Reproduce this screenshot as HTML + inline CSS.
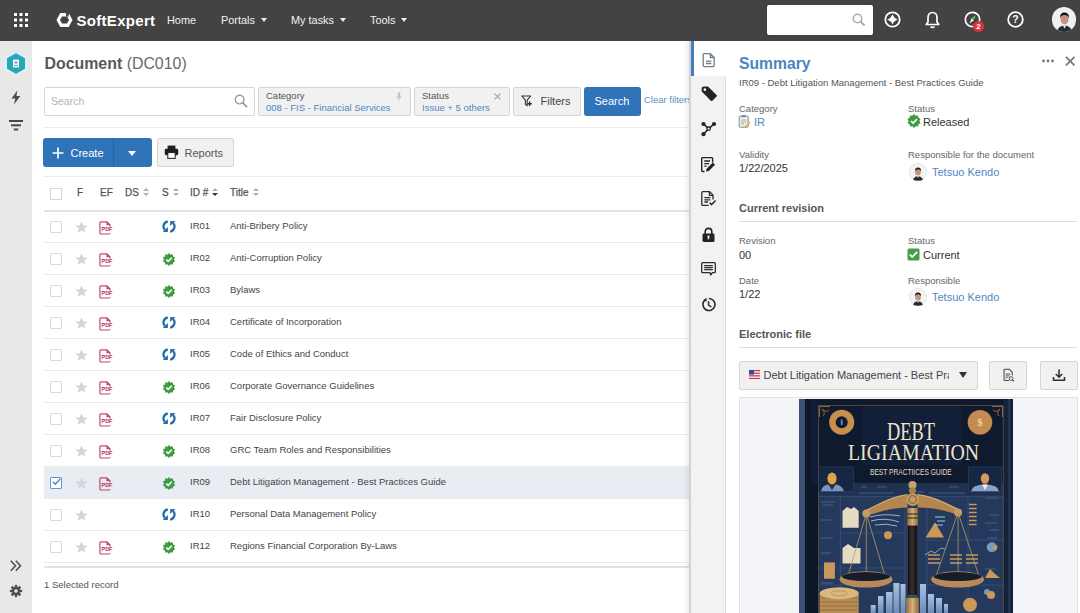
<!DOCTYPE html>
<html><head><meta charset="utf-8">
<style>
*{box-sizing:border-box;margin:0;padding:0}
html,body{width:1080px;height:613px;overflow:hidden;background:#fff;font-family:"Liberation Sans",sans-serif;color:#444}
.a{position:absolute;white-space:nowrap}
#hdr{position:absolute;left:0;top:0;width:1080px;height:41px;background:#434343}
#side{position:absolute;left:0;top:41px;width:32px;height:572px;background:#e8e8e8}
.nav{color:#f2f2f2;font-size:10.9px;top:14px}
.caret{display:inline-block;width:0;height:0;border-left:3.5px solid transparent;border-right:3.5px solid transparent;border-top:4px solid #eee;vertical-align:middle;margin-left:6px;margin-top:-2px}
.chip{position:absolute;top:87px;height:29px;background:#f1f1f1;border:1px solid #d6d6d6;border-radius:2px}
.chip .l{position:absolute;left:7px;top:1.5px;font-size:9.5px;color:#555}
.chip .v{position:absolute;left:7px;top:14px;font-size:9.5px;color:#5088c0}
.row{position:absolute;left:44px;width:646px;height:32px;border-bottom:1px solid #ebebeb}
.cb{position:absolute;left:6px;top:10.3px;width:12px;height:12px;border:1px solid #d9d9d9;background:#fff;border-radius:1px}
.rt{position:absolute;font-size:9.5px;color:#444;top:9.3px}
.th{position:absolute;font-size:10px;color:#555;top:187px;-webkit-text-stroke:0.25px #555}
.lbl{position:absolute;font-size:9.5px;color:#666}
.val{position:absolute;font-size:11px;color:#333;margin-top:0.5px}
.sec{position:absolute;font-size:11px;color:#555;font-weight:bold}
.link{color:#5088c0}
.tab{position:absolute;left:691px;width:35px;height:35px;background:#f2f2f2}
.ic{position:absolute}
.row.sel{background:#e8edf3}
.cb.on{border-color:#5a9ad6;background:#fff}
.srt{display:inline-block;width:6px;height:9px;margin-left:4px;vertical-align:-1px;position:relative}
.srt:before,.srt:after{content:"";position:absolute;left:0;border-left:3px solid transparent;border-right:3px solid transparent}
.srt:before{top:0;border-bottom:3px solid #b0b0b0}
.srt:after{top:5px;border-top:3px solid #b0b0b0}
.srt.d:after{border-top-color:#333}
</style></head><body>
<svg width="0" height="0" style="position:absolute">
<defs>
<symbol id="star" viewBox="0 0 12 11.3"><path d="M6.00 0.20 L7.59 4.02 L11.71 4.35 L8.57 7.03 L9.53 11.05 L6.00 8.90 L2.47 11.05 L3.43 7.03 L0.29 4.35 L4.41 4.02Z" fill="#d6d6d6"/></symbol>
<symbol id="pdf" viewBox="0 0 14 14"><path d="M8 0.8 H2 Q0.9 0.8 0.9 1.9 V12 Q0.9 13 2 13 H9.8 Q10.9 13 10.9 12 M10.9 5.6 V3.7 L8 0.8 V3.7 H10.9" fill="none" stroke="#c04a6a" stroke-width="1.2" stroke-linejoin="round"/><text x="2.6" y="10.4" font-family="Liberation Sans" font-weight="bold" font-size="5.4" fill="#b02c52" textLength="10.8" lengthAdjust="spacingAndGlyphs">PDF</text></symbol>
<symbol id="sync" viewBox="0 0 14 13"><path d="M5.8 1.5 A5 5 0 0 0 3.0 10.0" fill="none" stroke="#2a6cab" stroke-width="2.3"/><path d="M0.6 12.1 L5.9 12.1 L5.9 6.9Z" fill="#2a6cab"/><path d="M8.2 11.5 A5 5 0 0 0 11.0 3.0" fill="none" stroke="#2a6cab" stroke-width="2.3"/><path d="M13.4 0.9 L8.1 0.9 L8.1 6.1Z" fill="#2a6cab"/></symbol>
<symbol id="badge" viewBox="0 0 13 13"><path d="M6.50 0.10 L8.05 1.74 L10.26 1.32 L10.55 3.56 L12.59 4.52 L11.50 6.50 L12.59 8.48 L10.55 9.44 L10.26 11.68 L8.05 11.26 L6.50 12.90 L4.95 11.26 L2.74 11.68 L2.45 9.44 L0.41 8.48 L1.50 6.50 L0.41 4.52 L2.45 3.56 L2.74 1.32 L4.95 1.74Z" fill="#3e9a43"/><path d="M3.8 6.6 L5.7 8.4 L9.3 4.8" fill="none" stroke="#fff" stroke-width="1.6"/></symbol>
<symbol id="av" viewBox="0 0 18 18"><circle cx="9" cy="9" r="8.6" fill="#f4f4f6" stroke="#d6d6da" stroke-width="0.6"/><path d="M4.2 17 Q4.8 13.2 9 13.2 Q13.2 13.2 13.8 17 Q11.5 17.8 9 17.8 Q6.5 17.8 4.2 17Z" fill="#2a2a2e"/><path d="M8.1 13.2 L9 15 L9.9 13.2Z" fill="#fff"/><ellipse cx="9" cy="9" rx="2.9" ry="3.6" fill="#c9937a"/><path d="M5.9 8.2 Q5.8 4.6 9 4.6 Q12.2 4.6 12.1 8.2 Q11.4 6.4 9 6.3 Q6.6 6.4 5.9 8.2Z" fill="#1a1a1a"/></symbol>
</defs></svg>
<!-- HEADER -->
<div id="hdr">
  <!-- grid icon -->
  <svg class="a" style="left:14px;top:13px" width="14" height="14" viewBox="0 0 14 14" fill="#fff">
    <rect x="0" y="0" width="3" height="3"/><rect x="5.5" y="0" width="3" height="3"/><rect x="11" y="0" width="3" height="3"/>
    <rect x="0" y="5.5" width="3" height="3"/><rect x="5.5" y="5.5" width="3" height="3"/><rect x="11" y="5.5" width="3" height="3"/>
    <rect x="0" y="11" width="3" height="3"/><rect x="5.5" y="11" width="3" height="3"/><rect x="11" y="11" width="3" height="3"/>
  </svg>
  <!-- logo -->
  <svg class="a" style="left:56px;top:12px" width="17" height="16" viewBox="0 0 17 16">
    <path d="M4.3 1 L12.7 1 L16.5 8 L12.7 15 L4.3 15 L0.5 8 Z" fill="#fff"/>
    <path d="M6 4.5 L11 4.5 L13 8 L11 11.5 L6 11.5 L4 8 Z" fill="#434343"/>
    <path d="M9.6 -1 L13.4 -1 L12.4 4.8 L10.2 4.6 Z" fill="#434343"/>
  </svg>
  <div class="a" style="left:76.5px;top:11.5px;font-size:15px;font-weight:bold;color:#fff;letter-spacing:0.3px">SoftExpert</div>
  <div class="a nav" style="left:167px">Home</div>
  <div class="a nav" style="left:221px">Portals<span class="caret"></span></div>
  <div class="a nav" style="left:291px">My tasks<span class="caret"></span></div>
  <div class="a nav" style="left:370px">Tools<span class="caret"></span></div>
  <!-- search -->
  <div class="a" style="left:767px;top:5px;width:106px;height:30px;background:#fff;border-radius:2px"></div>
  <svg class="a" style="left:852px;top:13px" width="14" height="14" viewBox="0 0 14 14"><circle cx="5.5" cy="5.5" r="4.2" fill="none" stroke="#aaa" stroke-width="1.5"/><path d="M8.5 8.5 L12.5 12.5" stroke="#aaa" stroke-width="2"/></svg>
  <!-- icons -->
  <svg class="a" style="left:884px;top:11.2px" width="17" height="17" viewBox="0 0 17 17"><circle cx="8.5" cy="8.5" r="7.2" fill="none" stroke="#fff" stroke-width="1.8"/><path d="M8.5 3.5 Q10 7 13.5 8.5 Q10 10 8.5 13.5 Q7 10 3.5 8.5 Q7 7 8.5 3.5 Z" fill="#fff"/></svg>
  <svg class="a" style="left:925px;top:11px" width="15" height="18" viewBox="0 0 15 18"><path d="M7.5 1.5 C4.5 1.5 3 4 3 6.5 L3 11 L1.2 13.5 L13.8 13.5 L12 11 L12 6.5 C12 4 10.5 1.5 7.5 1.5 Z" fill="none" stroke="#fff" stroke-width="1.7" stroke-linejoin="round"/><path d="M5.5 15.5 Q7.5 17.5 9.5 15.5" stroke="#fff" stroke-width="1.6" fill="none"/></svg>
  <svg class="a" style="left:964px;top:11px" width="18" height="18" viewBox="0 0 18 18"><circle cx="8.5" cy="8.5" r="7.2" fill="none" stroke="#fff" stroke-width="1.7"/><path d="M11.5 4.5 L9.5 9.5 L5.5 12.5 L7.5 7.5 Z" fill="#fff"/><path d="M11.5 4.5 L9.5 9.5 L7.5 7.5 Z" fill="#4caf50"/></svg>
  <div class="a" style="left:973px;top:21px;width:11px;height:11px;border-radius:50%;background:#e0323c;color:#fff;font-size:8px;font-weight:bold;text-align:center;line-height:11px">2</div>
  <svg class="a" style="left:1007px;top:11.2px" width="17" height="17" viewBox="0 0 17 17"><circle cx="8.5" cy="8.5" r="7.3" fill="none" stroke="#fff" stroke-width="1.8"/><text x="8.5" y="12.3" text-anchor="middle" font-family="Liberation Sans" font-weight="bold" font-size="10.5" fill="#fff">?</text></svg>
  <!-- avatar -->
  <div class="a" style="left:1051.5px;top:7.3px;width:24.6px;height:24.6px;border-radius:50%;background:#eef0f3;overflow:hidden">
    <svg width="25" height="25" viewBox="0 0 25 25"><path d="M5 25 Q6 18.5 12.5 18.5 Q19 18.5 20 25Z" fill="#2a2d36"/><path d="M11 18.5 L12.5 21.5 L14 18.5Z" fill="#fff"/><ellipse cx="12.5" cy="12" rx="4.2" ry="5.3" fill="#c9927a"/><path d="M8 11 Q7.8 5.5 12.5 5.5 Q17.2 5.5 17 11 Q16 8 12.5 8 Q9 8 8 11Z" fill="#151515"/></svg>
  </div>
</div>

<!-- LEFT SIDEBAR -->
<div id="side"></div>
<svg class="a" style="left:4px;top:50px" width="24" height="27" viewBox="0 0 24 27">
  <path d="M12 1.2 L22.9 7.3 L22.9 19.7 L12 25.8 L1.1 19.7 L1.1 7.3 Z" fill="#d6f4f8"/>
  <path d="M12 3.2 L21 8.2 L21 18.8 L12 23.8 L3 18.8 L3 8.2 Z" fill="#2aa6b8"/>
  <path d="M9 9.6 H15 V17.4 H9 Z" fill="#fff"/>
  <path d="M10.2 12.6 H13.8 M12 10.8 V14.4 M10.2 15.6 H13.8" stroke="#2aa6b8" stroke-width="0.9"/>
</svg>
<svg class="a" style="left:10px;top:90px" width="12" height="15" viewBox="0 0 12 15"><path d="M7.3 0.5 L1.5 8.5 L5.3 8.5 L4 14.5 L10.4 6 L6.5 6 Z" fill="#4d4d4d"/></svg>
<svg class="a" style="left:9px;top:119px" width="15" height="12" viewBox="0 0 15 12"><rect x="0" y="1" width="14" height="2" fill="#4a4a4a"/><rect x="2" y="5.3" width="10" height="2" fill="#4a4a4a"/><rect x="4.8" y="9.5" width="4.4" height="2" fill="#4a4a4a"/></svg>
<svg class="a" style="left:9px;top:559px" width="14" height="14" viewBox="0 0 14 14"><path d="M1.8 1.8 L6.5 6.8 L1.8 11.8 M6.8 1.8 L11.5 6.8 L6.8 11.8" fill="none" stroke="#4a4a4a" stroke-width="1.5"/></svg>
<svg class="a" style="left:9px;top:583.7px" width="14" height="14" viewBox="0 0 14 14"><g fill="#505050"><circle cx="7" cy="7" r="4.2"/><g id="gt"><rect x="5.8" y="0.8" width="2.4" height="12.4"/><rect x="5.8" y="0.8" width="2.4" height="12.4" transform="rotate(45 7 7)"/><rect x="5.8" y="0.8" width="2.4" height="12.4" transform="rotate(90 7 7)"/><rect x="5.8" y="0.8" width="2.4" height="12.4" transform="rotate(135 7 7)"/></g></g><circle cx="7" cy="7" r="1.8" fill="#e8e8e8"/></svg>

<!-- MAIN TITLE -->
<div class="a" style="left:44.5px;top:55.2px;font-size:15.9px;color:#585858"><b>Document</b> <span style="color:#6a6a6a">(DC010)</span></div>

<!-- Search / filters -->
<div class="a" style="left:44px;top:87px;width:211px;height:29px;border:1px solid #d6d6d6;border-radius:2px;background:#fff"></div>
<div class="a" style="left:51px;top:95px;font-size:10.5px;color:#b5b5b5">Search</div>
<div class="chip" style="left:258px;width:153px"><div class="l">Category</div><div class="v">008 - FIS - Financial Services</div></div>
<div class="chip" style="left:414px;width:96px"><div class="l">Status</div><div class="v">Issue + 5 others</div></div>
<div class="a" style="left:513px;top:87px;width:68px;height:29px;background:#f1f1f1;border:1px solid #d6d6d6;border-radius:2px"></div>
<div class="a" style="left:540.5px;top:95px;font-size:11px;color:#444">Filters</div>
<div class="a" style="left:584px;top:87px;width:57px;height:29px;background:#2f73b9;border-radius:3px"></div>
<div class="a" style="left:594.5px;top:95px;font-size:11px;color:#fff">Search</div>
<div class="a" style="left:644px;top:94px;font-size:9.5px;color:#5a8fc4">Clear filters</div>
<div class="a" style="left:44px;top:127px;width:646px;height:1px;background:#ececec"></div>

<!-- Create / Reports -->
<div class="a" style="left:43px;top:138px;width:109px;height:29px;background:#2f73b9;border-radius:3px"></div>
<div class="a" style="left:113px;top:138px;width:1px;height:29px;background:#2763a3"></div>
<div class="a" style="left:70.5px;top:146.5px;font-size:11px;color:#fff">Create</div>
<div class="a" style="left:157px;top:138px;width:77px;height:29px;background:#f1f1f1;border:1px solid #d6d6d6;border-radius:2px"></div>
<div class="a" style="left:184.5px;top:146.5px;font-size:11px;color:#555">Reports</div>

<!-- table header -->
<div class="a" style="left:44px;top:176px;width:646px;height:1px;background:#ececec"></div>
<div class="a" style="left:44px;top:210px;width:646px;height:2px;background:#e3e3e3"></div>

<div class="a" style="left:50px;top:188px;width:12px;height:12px;border:1px solid #d4d4d4;background:#fff"></div>
<div class="th" style="left:77px">F</div>
<div class="th" style="left:100px">EF</div>
<div class="th" style="left:125px">DS<span class="srt"></span></div>
<div class="th" style="left:162px">S<span class="srt"></span></div>
<div class="th" style="left:190px">ID #<span class="srt d"></span></div>
<div class="th" style="left:230px">Title<span class="srt"></span></div>
<div class="row" style="top:211px"><div class="cb"></div><svg class="ic" style="left:30.5px;top:10px" width="13" height="12.2"><use href="#star"/></svg><svg class="ic" style="left:55px;top:10px" width="14" height="14"><use href="#pdf"/></svg><svg class="ic" style="left:118px;top:9.2px" width="14" height="13"><use href="#sync"/></svg><div class="rt" style="left:146px">IR01</div><div class="rt" style="left:186px">Anti-Bribery Policy</div></div>
<div class="row" style="top:243px"><div class="cb"></div><svg class="ic" style="left:30.5px;top:10px" width="13" height="12.2"><use href="#star"/></svg><svg class="ic" style="left:55px;top:10px" width="14" height="14"><use href="#pdf"/></svg><svg class="ic" style="left:118px;top:9.6px" width="14" height="13"><use href="#badge"/></svg><div class="rt" style="left:146px">IR02</div><div class="rt" style="left:186px">Anti-Corruption Policy</div></div>
<div class="row" style="top:275px"><div class="cb"></div><svg class="ic" style="left:30.5px;top:10px" width="13" height="12.2"><use href="#star"/></svg><svg class="ic" style="left:55px;top:10px" width="14" height="14"><use href="#pdf"/></svg><svg class="ic" style="left:118px;top:9.6px" width="14" height="13"><use href="#badge"/></svg><div class="rt" style="left:146px">IR03</div><div class="rt" style="left:186px">Bylaws</div></div>
<div class="row" style="top:307px"><div class="cb"></div><svg class="ic" style="left:30.5px;top:10px" width="13" height="12.2"><use href="#star"/></svg><svg class="ic" style="left:55px;top:10px" width="14" height="14"><use href="#pdf"/></svg><svg class="ic" style="left:118px;top:9.2px" width="14" height="13"><use href="#sync"/></svg><div class="rt" style="left:146px">IR04</div><div class="rt" style="left:186px">Certificate of Incorporation</div></div>
<div class="row" style="top:339px"><div class="cb"></div><svg class="ic" style="left:30.5px;top:10px" width="13" height="12.2"><use href="#star"/></svg><svg class="ic" style="left:55px;top:10px" width="14" height="14"><use href="#pdf"/></svg><svg class="ic" style="left:118px;top:9.2px" width="14" height="13"><use href="#sync"/></svg><div class="rt" style="left:146px">IR05</div><div class="rt" style="left:186px">Code of Ethics and Conduct</div></div>
<div class="row" style="top:371px"><div class="cb"></div><svg class="ic" style="left:30.5px;top:10px" width="13" height="12.2"><use href="#star"/></svg><svg class="ic" style="left:55px;top:10px" width="14" height="14"><use href="#pdf"/></svg><svg class="ic" style="left:118px;top:9.6px" width="14" height="13"><use href="#badge"/></svg><div class="rt" style="left:146px">IR06</div><div class="rt" style="left:186px">Corporate Governance Guidelines</div></div>
<div class="row" style="top:403px"><div class="cb"></div><svg class="ic" style="left:30.5px;top:10px" width="13" height="12.2"><use href="#star"/></svg><svg class="ic" style="left:55px;top:10px" width="14" height="14"><use href="#pdf"/></svg><svg class="ic" style="left:118px;top:9.2px" width="14" height="13"><use href="#sync"/></svg><div class="rt" style="left:146px">IR07</div><div class="rt" style="left:186px">Fair Disclosure Policy</div></div>
<div class="row" style="top:435px"><div class="cb"></div><svg class="ic" style="left:30.5px;top:10px" width="13" height="12.2"><use href="#star"/></svg><svg class="ic" style="left:55px;top:10px" width="14" height="14"><use href="#pdf"/></svg><svg class="ic" style="left:118px;top:9.6px" width="14" height="13"><use href="#badge"/></svg><div class="rt" style="left:146px">IR08</div><div class="rt" style="left:186px">GRC Team Roles and Responsibilities</div></div>
<div class="row sel" style="top:467px"><div class="cb on"></div><svg class="ic" style="left:30.5px;top:10px" width="13" height="12.2"><use href="#star"/></svg><svg class="ic" style="left:55px;top:10px" width="14" height="14"><use href="#pdf"/></svg><svg class="ic" style="left:118px;top:9.6px" width="14" height="13"><use href="#badge"/></svg><div class="rt" style="left:146px">IR09</div><div class="rt" style="left:186px">Debt Litigation Management - Best Practices Guide</div></div>
<div class="row" style="top:499px"><div class="cb"></div><svg class="ic" style="left:30.5px;top:10px" width="13" height="12.2"><use href="#star"/></svg><svg class="ic" style="left:118px;top:9.2px" width="14" height="13"><use href="#sync"/></svg><div class="rt" style="left:146px">IR10</div><div class="rt" style="left:186px">Personal Data Management Policy</div></div>
<div class="row" style="top:531px"><div class="cb"></div><svg class="ic" style="left:30.5px;top:10px" width="13" height="12.2"><use href="#star"/></svg><svg class="ic" style="left:55px;top:10px" width="14" height="14"><use href="#pdf"/></svg><svg class="ic" style="left:118px;top:9.6px" width="14" height="13"><use href="#badge"/></svg><div class="rt" style="left:146px">IR12</div><div class="rt" style="left:186px">Regions Financial Corporation By-Laws</div></div>
<div class="a" style="left:44px;top:566px;width:646px;height:2px;background:#e3e3e3"></div>
<div class="a" style="left:44px;top:579px;font-size:9.5px;color:#555">1 Selected record</div>


<!-- misc icons -->
<svg class="a" style="left:234px;top:94px" width="14" height="14" viewBox="0 0 14 14"><circle cx="5.6" cy="5.6" r="4.3" fill="none" stroke="#9a9a9a" stroke-width="1.4"/><path d="M8.7 8.7 L12.6 12.6" stroke="#9a9a9a" stroke-width="1.8" stroke-linecap="round"/></svg>
<svg class="a" style="left:395px;top:92px" width="8" height="9" viewBox="0 0 8 9"><path d="M2.6 0.5 H5.4 L5 3.6 L6.8 5.8 H1.2 L3 3.6 Z" fill="#c2c2c2"/><path d="M4 5.8 V8.8" stroke="#c2c2c2" stroke-width="0.9"/></svg>
<svg class="a" style="left:494px;top:93px" width="7" height="7" viewBox="0 0 7 7"><path d="M0.6 0.6 L6.4 6.4 M6.4 0.6 L0.6 6.4" stroke="#a8a8a8" stroke-width="1.3"/></svg>
<svg class="a" style="left:521px;top:95px" width="12" height="12" viewBox="0 0 12 12"><path d="M0.8 1 H9.6 L6.2 5.2 V10.8 L4.4 9.4 V5.2 Z" fill="none" stroke="#333" stroke-width="1.1" stroke-linejoin="round"/><path d="M8.6 6.6 V11 M6.4 8.8 H10.8" stroke="#333" stroke-width="1.4"/></svg>
<svg class="a" style="left:52px;top:147px" width="12" height="12" viewBox="0 0 12 12"><path d="M6 0.5 V11.5 M0.5 6 H11.5" stroke="#fff" stroke-width="1.7"/></svg>
<div class="a" style="left:128px;top:150.5px;width:0;height:0;border-left:4.5px solid transparent;border-right:4.5px solid transparent;border-top:5px solid #fff"></div>
<svg class="a" style="left:164px;top:145px" width="15" height="14" viewBox="0 0 15 14"><rect x="3.6" y="0.6" width="7.8" height="3.6" fill="#1e1e1e"/><rect x="0.8" y="3.8" width="13.4" height="6.4" rx="1.4" fill="#1e1e1e"/><rect x="3.8" y="7.6" width="7.4" height="5.8" fill="#fff" stroke="#1e1e1e" stroke-width="1"/></svg>
<svg class="a" style="left:51px;top:477px" width="11" height="10" viewBox="0 0 11 10"><path d="M1.8 4.6 L4.4 7.2 L9.4 1.6" fill="none" stroke="#3b7fc4" stroke-width="1.3"/></svg>

<!-- RIGHT PANEL -->
<div class="a" style="left:683px;top:41px;width:6px;height:572px;background:linear-gradient(to right,rgba(0,0,0,0),rgba(0,0,0,0.07))"></div>
<div class="a" style="left:689px;top:41px;width:2px;height:572px;background:#d2d2d2"></div>
<div class="a" style="left:691px;top:41px;width:389px;height:572px;background:#fff"></div>
<div class="a" style="left:691px;top:76px;width:35px;height:537px;background:#f2f2f2;border-right:1px solid #dcdcdc"></div>
<div class="a" style="left:691px;top:41px;width:3px;height:35px;background:#3f7fc0"></div>

<div class="a" style="left:739px;top:55px;font-size:15.7px;font-weight:bold;color:#4a86bd">Summary</div>
<div class="a" style="left:739px;top:77px;font-size:9.5px;color:#555">IR09 - Debt Litigation Management - Best Practices Guide</div>


<!-- tab icons -->
<svg class="a" style="left:701px;top:51.5px" width="16" height="16" viewBox="0 0 16 16"><path d="M9.3 1.6 H3.2 Q2.2 1.6 2.2 2.6 V13.6 Q2.2 14.6 3.2 14.6 H12.2 Q13.2 14.6 13.2 13.6 V5.5 Z M9.3 1.6 V5.5 H13.2" fill="none" stroke="#6f7d8f" stroke-width="1.3" stroke-linejoin="round"/><path d="M5 9.2 H10.4 M5 11.5 H10.4" stroke="#6f7d8f" stroke-width="1.3"/></svg>
<svg class="a" style="left:700px;top:85px" width="17" height="17" viewBox="0 0 16 16"><path d="M1.5 3.5 Q1.5 1.3 3.7 1.3 L7.5 1.3 L15.6 9.4 Q16.3 10.1 15.6 10.8 L11.6 14.8 Q10.9 15.5 10.2 14.8 L2.1 6.7 Q1.5 6.1 1.5 5.3 Z" fill="#232323"/><circle cx="4.6" cy="4.4" r="1.3" fill="#f2f2f2"/></svg>
<svg class="a" style="left:701px;top:121px" width="16" height="16" viewBox="0 0 16 16"><path d="M2.5 3 L7.6 7.7 L13 3 M7.6 7.7 L2.5 13.2" stroke="#232323" stroke-width="1.6" fill="none"/><circle cx="2.5" cy="3" r="2.1" fill="#232323"/><circle cx="13" cy="3" r="2.1" fill="#232323"/><circle cx="2.5" cy="13.2" r="2.1" fill="#232323"/><circle cx="7.6" cy="7.7" r="1.7" fill="#f2f2f2" stroke="#232323" stroke-width="1.3"/></svg>
<svg class="a" style="left:700px;top:156px" width="17" height="17" viewBox="0 0 17 17"><path d="M12.6 6.5 V2.5 Q12.6 1.6 11.7 1.6 H2.6 Q1.7 1.6 1.7 2.5 V14.6 Q1.7 15.5 2.6 15.5 H4.5" fill="none" stroke="#232323" stroke-width="1.4"/><path d="M4.3 5 H10 M4.3 7.6 H9 M4.3 10.2 H6.5" stroke="#232323" stroke-width="1.3"/><path d="M6 15.6 L6.6 12.8 L12.8 6.6 L15 8.8 L8.8 15 Z" fill="#232323"/></svg>
<svg class="a" style="left:700px;top:190px" width="17" height="17" viewBox="0 0 17 17"><path d="M8.6 15.3 H2.7 Q1.8 15.3 1.8 14.4 V2.6 Q1.8 1.7 2.7 1.7 H9.6 L13 5.1 V9.5" fill="none" stroke="#2b2b2b" stroke-width="1.3" stroke-linejoin="round"/><path d="M9.4 1.8 V5.3 H13" fill="none" stroke="#2b2b2b" stroke-width="1.2"/><path d="M4.4 7.6 H10.4 M4.4 9.8 H10.4 M4.4 12 H8" stroke="#2b2b2b" stroke-width="1.3"/><path d="M9.6 12.7 L11.5 14.6 L15.6 10.5" fill="none" stroke="#2b2b2b" stroke-width="1.5"/></svg>
<svg class="a" style="left:701px;top:227px" width="15" height="16" viewBox="0 0 15 16"><path d="M4.2 7 V4.8 Q4.2 1.4 7.5 1.4 Q10.8 1.4 10.8 4.8 V7" fill="none" stroke="#232323" stroke-width="1.6"/><rect x="1.5" y="6.5" width="12" height="8.6" rx="1.4" fill="#232323"/><path d="M7.5 9.4 V12.3" stroke="#f2f2f2" stroke-width="1.4"/><circle cx="7.5" cy="9.6" r="1.1" fill="#f2f2f2"/></svg>
<svg class="a" style="left:700px;top:261px" width="17" height="16" viewBox="0 0 17 16"><path d="M2.6 1.6 H14.4 Q15.3 1.6 15.3 2.5 V10.8 Q15.3 11.7 14.4 11.7 H12.3 L10.8 14 L10 11.7 H2.6 Q1.7 11.7 1.7 10.8 V2.5 Q1.7 1.6 2.6 1.6 Z" fill="none" stroke="#2b2b2b" stroke-width="1.3" stroke-linejoin="round"/><path d="M4.2 4.6 H12.8 M4.2 6.6 H12.8 M4.2 8.7 H12.8" stroke="#2b2b2b" stroke-width="1.2"/></svg>
<svg class="a" style="left:701px;top:297px" width="16" height="15" viewBox="0 0 16 15"><path d="M4.2 2.8 A6 6 0 1 0 7.8 1.5" fill="none" stroke="#2b2b2b" stroke-width="1.6"/><path d="M2 3.4 L5.4 0.8 L5.8 4.6Z" fill="#2b2b2b"/><path d="M7.6 4.2 V8 L10.4 10" fill="none" stroke="#2b2b2b" stroke-width="1.5"/></svg>

<!-- panel header -->
<svg class="a" style="left:1041px;top:58px" width="14" height="6" viewBox="0 0 14 6"><circle cx="2.5" cy="3" r="1.4" fill="#777"/><circle cx="7" cy="3" r="1.4" fill="#777"/><circle cx="11.5" cy="3" r="1.4" fill="#777"/></svg>
<svg class="a" style="left:1064px;top:55px" width="12" height="12" viewBox="0 0 12 12"><path d="M2 1.8 L10.5 10.3 M10.5 1.8 L2 10.3" stroke="#777" stroke-width="1.7"/></svg>

<div class="lbl" style="left:739px;top:103px">Category</div>
<svg class="a" style="left:738px;top:114px" width="13" height="14" viewBox="0 0 13 14"><rect x="1.2" y="2.2" width="9" height="11" rx="0.8" fill="#f6f0e0" stroke="#7a8aa0" stroke-width="1"/><rect x="3.7" y="0.9" width="4" height="2.4" rx="0.6" fill="#7a8aa0"/><path d="M3 6 H8.4 M3 8 H8.4 M3 10 H6" stroke="#8a99ad" stroke-width="0.8"/><path d="M8 13.4 L12.6 8.8 L11.4 7.6 L6.8 12.2 Z" fill="#e8b53a"/></svg>
<div class="val link" style="left:754px;top:115px">IR</div>
<div class="lbl" style="left:908px;top:103px">Status</div>
<svg class="a" style="left:907px;top:114px" width="14" height="14"><use href="#badge"/></svg>
<div class="val" style="left:923px;top:115px">Released</div>

<div class="lbl" style="left:739px;top:149px">Validity</div>
<div class="val" style="left:739px;top:161px">1/22/2025</div>
<div class="lbl" style="left:908px;top:149px">Responsible for the document</div>
<svg class="a" style="left:909px;top:163px" width="18" height="18"><use href="#av"/></svg>
<div class="val link" style="left:932px;top:165px">Tetsuo Kendo</div>

<div class="sec" style="left:739px;top:202px">Current revision</div>
<div class="a" style="left:739px;top:221px;width:338px;height:1px;background:#dedede"></div>

<div class="lbl" style="left:739px;top:235px">Revision</div>
<div class="val" style="left:739px;top:248px">00</div>
<div class="lbl" style="left:908px;top:235px">Status</div>
<svg class="a" style="left:907px;top:248px" width="13" height="13" viewBox="0 0 13 13"><rect x="0.5" y="0.5" width="12" height="12" rx="1.5" fill="#43a047"/><path d="M2.8 6.6 L5.3 9 L10.2 3.9" fill="none" stroke="#fff" stroke-width="1.8"/></svg>
<div class="val" style="left:923px;top:248px">Current</div>
<div class="lbl" style="left:739px;top:275px">Date</div>
<div class="val" style="left:739px;top:287px">1/22</div>
<div class="lbl" style="left:908px;top:275px">Responsible</div>
<svg class="a" style="left:909px;top:288px" width="18" height="18"><use href="#av"/></svg>
<div class="val link" style="left:932px;top:290px">Tetsuo Kendo</div>

<div class="sec" style="left:739px;top:328px">Electronic file</div>
<div class="a" style="left:739px;top:347px;width:338px;height:1px;background:#dedede"></div>

<div class="a" style="left:739px;top:361px;width:239px;height:29px;background:#f1f1f1;border:1px solid #d6d6d6;border-radius:2px"></div>
<svg class="a" style="left:749px;top:370px" width="11" height="9" viewBox="0 0 11 9"><rect width="11" height="9" fill="#c8374a"/><rect y="1.3" width="11" height="1.3" fill="#fff"/><rect y="3.9" width="11" height="1.3" fill="#fff"/><rect y="6.5" width="11" height="1.3" fill="#fff"/><rect width="5" height="4.6" fill="#3a4a9a"/></svg>
<div class="a" style="left:763.5px;top:369px;width:185.5px;overflow:hidden;font-size:11px;color:#444">Debt Litigation Management - Best Practices Guide</div>
<div class="a" style="left:959px;top:372px;width:0;height:0;border-left:4.5px solid transparent;border-right:4.5px solid transparent;border-top:6px solid #333"></div>
<div class="a" style="left:989px;top:361px;width:38px;height:29px;background:#f1f1f1;border:1px solid #d6d6d6;border-radius:2px"></div>
<div class="a" style="left:1040px;top:361px;width:38px;height:29px;background:#f1f1f1;border:1px solid #d6d6d6;border-radius:2px"></div>
<svg class="a" style="left:1002px;top:368px" width="13" height="14" viewBox="0 0 14 15"><path d="M7.5 13.5 H3 Q2.2 13.5 2.2 12.7 V2.2 Q2.2 1.4 3 1.4 H8 L11 4.4 V8" fill="none" stroke="#444" stroke-width="1.1"/><path d="M4 6.5 H9 M4 8.5 H8 M4 10.5 H6" stroke="#444" stroke-width="1"/><circle cx="9.8" cy="11.3" r="2" fill="none" stroke="#444" stroke-width="1"/><path d="M11.2 12.7 L12.8 14.3" stroke="#444" stroke-width="1.1"/></svg>
<svg class="a" style="left:1052px;top:368px" width="14" height="14" viewBox="0 0 14 14"><path d="M7 1.5 V9 M3.8 6 L7 9.2 L10.2 6" fill="none" stroke="#333" stroke-width="1.6"/><path d="M1.5 9 V12.3 H12.5 V9" fill="none" stroke="#333" stroke-width="1.6"/></svg>

<div class="a" style="left:739px;top:397px;width:339px;height:216px;background:#f3f5f8;border:1px solid #e2e2e2;border-bottom:none"></div>

<!-- BOOK -->
<svg class="a" style="left:799px;top:399px" width="214" height="214" viewBox="0 0 214 214">
<defs>
<linearGradient id="pil" x1="0" y1="0" x2="1" y2="0"><stop offset="0" stop-color="#15110f"/><stop offset="0.45" stop-color="#3a2e28"/><stop offset="1" stop-color="#120e0c"/></linearGradient>
<linearGradient id="gld" x1="0" y1="0" x2="1" y2="0"><stop offset="0" stop-color="#8e6a40"/><stop offset="0.5" stop-color="#d6b07a"/><stop offset="1" stop-color="#8a6640"/></linearGradient>
<linearGradient id="bar" x1="0" y1="0" x2="0" y2="1"><stop offset="0" stop-color="#a8c0e0"/><stop offset="1" stop-color="#6e8cb8"/></linearGradient>
</defs>
<rect x="0" y="0" width="214" height="214" fill="#24395c"/>
<rect x="19" y="0" width="186" height="84" fill="#0f1a2f"/>
<rect x="63" y="8" width="100" height="58" fill="#121f38"/>
<!-- top labels band -->
<rect x="19" y="84" width="186" height="13" fill="#1f3254"/>
<!-- grid -->
<g stroke="#3b5682" stroke-width="0.7" fill="none">
<path d="M19 97.3 H204 M41.3 134 H106 M19 169 H106 M19 186 H106 M128 141 H204 M128 186 H204 M41.3 97 V214 M169 97 V214 M106 97 V214 M128 97 V214"/>
</g>
<g stroke="#7890b8" stroke-width="0.9" opacity="0.5">
<path d="M22 103 H36 M24 106 H34 M22 121 H32 M22 139 H34 M22 154 H32 M22 184 H34 M186 99 H200 M190 116 H200 M186 124 H198 M190 131 H200 M188 139 H198 M186 170 H196 M62 88 H68 M78 88 H88 M110 93 H125 M150 88 H160 M176 88 H186 M60 94 H95 M130 94 H166"/>
</g>
<!-- spine -->
<rect x="0" y="0" width="6" height="214" fill="#3b5274"/>
<rect x="6" y="0" width="13" height="214" fill="#0d172a"/>
<rect x="12" y="0" width="7" height="84" fill="#111d36"/>
<rect x="204.6" y="0" width="9.4" height="214" fill="#15223b"/>
<rect x="209.5" y="0" width="1.6" height="214" fill="#2c3f60"/>
<path d="M19.5 214 V6.5 H204.3 V214" fill="none" stroke="#5e4c38" stroke-width="0.9"/>
<path d="M20.5 7.5 L31 7.5 M20.5 7.5 L20.5 18 M23 10 Q27 14 30 11 M23 10 Q27 14 24 17" stroke="#8a6a44" stroke-width="1" fill="none"/><path d="M203.5 7.5 L193 7.5 M203.5 7.5 L203.5 18 M201 10 Q197 14 194 11 M201 10 Q197 14 200 17" stroke="#8a6a44" stroke-width="1" fill="none"/>
<!-- circles -->
<circle cx="42.7" cy="23.2" r="12.5" fill="#c78f4e"/><circle cx="42.7" cy="23.2" r="6" fill="#0f1a2f"/><rect x="41.8" y="20.5" width="1.8" height="5.5" fill="#6a8ac0"/>
<circle cx="181" cy="23.2" r="12.3" fill="#c48c50"/><text x="181" y="27" text-anchor="middle" font-family="Liberation Serif" font-weight="bold" font-size="10" fill="#f0d8a8">$</text>
<!-- title -->
<text x="88" y="40.7" font-family="Liberation Serif" font-size="24.5" fill="#eee4c8" textLength="48" lengthAdjust="spacingAndGlyphs">DEBT</text>
<text x="49" y="61" font-family="Liberation Serif" font-size="23.5" fill="#eee4c8" textLength="131.2" lengthAdjust="spacingAndGlyphs">LIGIAMATION</text>
<text x="71" y="76" font-family="Liberation Sans" font-size="8.8" fill="#e4dac2" textLength="81.7" lengthAdjust="spacingAndGlyphs">BEST PRACTIICES GUIDE</text>
<!-- figures -->
<rect x="19.8" y="68" width="35" height="24.3" fill="#172643" stroke="#2c4068" stroke-width="0.6"/>
<path d="M22 92.3 Q23 85 33 85 Q43 85 45 92.3Z" fill="#7c94b8"/><path d="M29 85 L33 91 L37 85Z" fill="#20304e"/>
<ellipse cx="33" cy="79.5" rx="4.6" ry="6" fill="#e0a446"/>
<rect x="169.3" y="68" width="33.4" height="24.3" fill="#172643" stroke="#2c4068" stroke-width="0.6"/>
<path d="M172 92.3 Q173 85.5 186 85.5 Q199 85.5 200 92.3Z" fill="#8aa2c4"/><path d="M183 85.5 L186 91 L189 85.5Z" fill="#eeeeee"/>
<ellipse cx="186" cy="79.5" rx="4.2" ry="5.2" fill="#d89a5a"/>
<!-- houses etc -->
<path d="M43.5 128.7 V112 L48 108 L52 110 L55 108 L59.7 112 V128.7Z" fill="#e6dac0"/>
<path d="M43.5 164.5 V149 L49 145 L55 149 L61.5 149 V164.5Z" fill="#e6dac0"/>
<rect x="25" y="163.4" width="10.9" height="16.3" fill="#c8995a"/>
<path d="M126.6 138.5 L136 123.3 L145 138.5Z" fill="#c8995a"/>
<circle cx="89" cy="136.3" r="4" fill="#c8995a"/>
<circle cx="171" cy="205.7" r="7" fill="#c8995a"/>
<g stroke="#c8995a" stroke-width="1.4"><path d="M170 105.5 H177.6 M170 109.5 H177.6 M170 113.5 H177.6 M170 117.5 H177.6 M170 121.5 H177.6 M170 125.5 H177.6"/></g>
<g stroke="#c8995a" stroke-width="1.4"><path d="M129 156 H141 M129 160 H141 M129 164 H141 M151 156 H163 M151 160 H163 M151 164 H163 M167 156 H179 M167 160 H179 M167 164 H179"/></g>
<path d="M126 156 L132 152 L136 154 L142 149 L146 150" stroke="#a8c0e0" stroke-width="0.8" fill="none"/>
<path d="M71 118 Q85 114 101 117 M72 122 Q86 118 100 123 M76 126 Q88 124 98 127" stroke="#a8c0e0" stroke-width="0.9" fill="none"/>
<path d="M136 118 H146 M138 122 H146 M136 126 H144" stroke="#a8c8e8" stroke-width="1.2"/>
<circle cx="192.8" cy="148.2" r="5" fill="#7a98c0"/><path d="M192.8 148.2 L198 146 A5 5 0 0 1 196 152Z" fill="#c8995a"/>
<path d="M186 179 L191 170 L195 174 L201 179Z" fill="#c8995a"/>
<circle cx="188" cy="193" r="3" fill="#7a98c0"/><circle cx="192" cy="196" r="4" fill="#c8995a"/>
<!-- bars -->
<g fill="url(#bar)">
<rect x="71.7" y="206" width="5" height="8"/><rect x="79" y="197" width="5.5" height="17"/><rect x="87" y="193" width="6.5" height="21"/><rect x="94.4" y="184" width="6" height="30"/><rect x="101.5" y="185" width="5" height="29"/>
<rect x="121" y="185" width="6" height="29"/><rect x="129" y="195" width="6" height="19"/><rect x="137" y="199" width="6" height="15"/><rect x="145" y="205" width="4" height="9"/>
</g>
<!-- coins -->
<rect x="20.7" y="194.3" width="39" height="20" fill="#b88c55"/>
<g stroke="#8e6a3a" stroke-width="0.8"><path d="M20.7 199 H59.7 M20.7 203 H59.7 M20.7 207 H59.7 M20.7 211 H59.7"/></g>
<ellipse cx="40.2" cy="194.3" rx="19.5" ry="6" fill="#d8b880"/><ellipse cx="40.2" cy="194.3" rx="8" ry="2.5" fill="none" stroke="#b89050" stroke-width="0.8"/>
<!-- scale -->
<path d="M108.5 95.5 C95 97 84 103 67 111.5 L67.5 117 C84 111.5 95 108.5 108.5 108.5 Z" fill="#b3854f"/><path d="M108.5 95.5 C95 97 84 103 67 111.5" stroke="#d8b07a" stroke-width="1.2" fill="none"/>
<path d="M118.5 95.5 C132 97 143 102.5 159.5 110.5 L159 116 C143 110.5 132 108.5 118.5 108.5 Z" fill="#b3854f"/><path d="M118.5 95.5 C132 97 143 102.5 159.5 110.5" stroke="#d8b07a" stroke-width="1.2" fill="none"/>
<rect x="109" y="126.5" width="9" height="70" fill="url(#pil)"/>
<rect x="108.2" y="109" width="10.8" height="17.5" fill="url(#gld)"/>
<path d="M108.2 115 H119 M108.2 119 H119" stroke="#2a211c" stroke-width="1.2"/>
<rect x="109" y="196" width="9" height="3" fill="#2d5a52"/>
<rect x="107" y="199" width="13" height="15" fill="url(#gld)"/>
<circle cx="113.5" cy="86" r="4" fill="#c8a070"/><ellipse cx="113.5" cy="91.5" rx="3.5" ry="3" fill="#a88050"/>
<circle cx="113.6" cy="100.5" r="6.5" fill="#c69c64"/><circle cx="113.6" cy="100.5" r="3.8" fill="none" stroke="#8a6238" stroke-width="1.2"/>
<circle cx="67.3" cy="114.6" r="4" fill="#c69c64"/><circle cx="159.1" cy="113.5" r="4" fill="#c69c64"/>
<g stroke="#b89a68" stroke-width="0.8"><path d="M67.3 114.6 L49 177 M67.3 114.6 L86 177 M67.3 114.6 V177 M159.1 113.5 L137 177 M159.1 113.5 L180 177 M159.1 113.5 V177"/></g>
<ellipse cx="67" cy="180.4" rx="26.5" ry="8.2" fill="#b88a58"/><ellipse cx="67" cy="177.6" rx="24" ry="4.5" fill="#161c2c"/>
<ellipse cx="158.6" cy="180.4" rx="26.5" ry="8.2" fill="#b88a58"/><ellipse cx="158.6" cy="177.6" rx="24" ry="4.5" fill="#161c2c"/>
</svg>

</body></html>
